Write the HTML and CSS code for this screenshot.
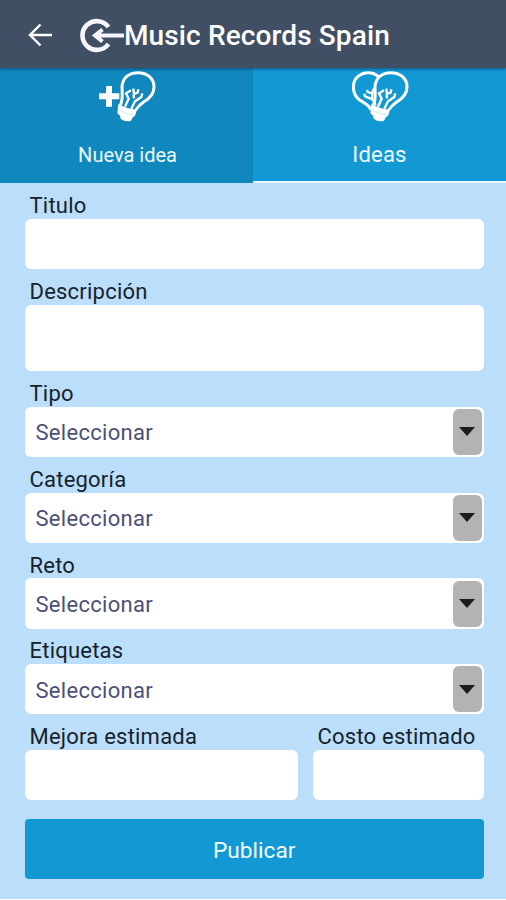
FILE: index.html
```
<!DOCTYPE html>
<html lang="es">
<head>
<meta charset="utf-8">
<title>Nueva idea</title>
<link rel="stylesheet" href="styles.css">
</head>
<body>
<header class="bar">
  <svg class="back" width="26" height="26" viewBox="0 0 26 26"><path d="M25 13H3M13.500 2.500L3 13l10.500 10.500"/></svg>
  <svg class="logo" width="46" height="38" viewBox="0 0 46 38"><path class="ring" d="M29.500 11A14.400 14.400 0 1 0 29.500 28"/><path class="arrow" d="M45 19.500H16M23.500 13.500L16 19.500l7.500 6"/></svg>
  <h1 class="title">Music Records Spain</h1>
</header>
<svg class="defs" width="0" height="0">
  <symbol id="bulb" viewBox="0 0 198 180">
    <path class="line" d="M79 118C88 98 84 82 84 62C86 34 106 20 132 20C160 20 180 38 180 63C180 86 166 98 149 108C137 116 132 122 125 132"/>
    <path class="wire" d="M93 122L104 98L96 82L111 73M112 128L123 106L142 93L145 82M120 97L119 85M118 68L120 84L131 80L133 70"/>
    <path class="cap" d="M73 114Q98 129 129 131L123 149L117 153L111 164Q94 169 80 158L78 149L70 142Z"/>
    <path class="groove" d="M75 132Q94 145 121 147"/>
  </symbol>
</svg>
<nav class="tabs">
  <a class="tab active">
    <svg class="icon" width="66" height="58" viewBox="0 6 198 174"><path class="plus" d="M15 91H76M45 60V122"/><use href="#bulb" width="198" height="180"/></svg>
    <span class="tab-small">Nueva idea</span>
  </a>
  <a class="tab other">
    <svg class="icon" width="66" height="58" viewBox="0 6 198 174">
      <path class="line" d="M72 132C66 116 52 112 38 102C14 84 14 48 32 32C50 16 78 16 94 32"/>
      <path class="wire" d="M86 118L77 100L54 91L52 83M75 96L76 82L62 78L60 72M76 82L80 68"/>
      <use href="#bulb" width="198" height="180"/>
    </svg>
    <span class="tab-large">Ideas</span>
  </a>
</nav>
<main class="form">
  <label class="field"><span class="label">Titulo</span><span class="box"></span></label>
  <label class="field"><span class="label">Descripción</span><span class="box tall"></span></label>
  <label class="field"><span class="label">Tipo</span><span class="box select"><span>Seleccionar</span><i class="drop"></i></span></label>
  <label class="field"><span class="label">Categoría</span><span class="box select"><span>Seleccionar</span><i class="drop"></i></span></label>
  <label class="field"><span class="label">Reto</span><span class="box select"><span>Seleccionar</span><i class="drop"></i></span></label>
  <label class="field"><span class="label">Etiquetas</span><span class="box select"><span>Seleccionar</span><i class="drop"></i></span></label>
  <div class="pair">
    <label class="field"><span class="label">Mejora estimada</span><span class="box"></span></label>
    <label class="field"><span class="label">Costo estimado</span><span class="box"></span></label>
  </div>
  <button class="submit">Publicar</button>
</main>
</body>
</html>
```
FILE: styles.css
```
* { box-sizing: border-box; }
body { margin: 0; height: 900px; background: #fff; font-family: Roboto, "Liberation Sans", sans-serif; overflow: hidden; }
.bar { position: relative; display: flex; align-items: center; height: 68px; padding: 3px 0 0 27px; background: #414f65; box-shadow: 0 1px 3px rgba(0, 30, 60, .55); }
.back { fill: none; stroke: #fff; stroke-width: 2.4; margin-top: -2px; }
.logo { margin-left: 26px; fill: none; stroke: #f4f6fc; margin-top: -1px; }
.ring { stroke-width: 4.600; }
.arrow { stroke-width: 4; }
.title { margin: 0 0 0 -1px; color: #fff; font-size: 28px; font-weight: 500; line-height: 36px; letter-spacing: .12px; white-space: nowrap; }
.defs { display: block; height: 0; }
.tabs { display: grid; grid-template-columns: 253px 253px; height: 115px; }
.tab { display: flex; flex-direction: column; align-items: center; color: #eefaff; }
.active { background: #1088bd; }
.other { background: #1299d4; border-bottom: 2px solid #e4f6ff; }
.icon { display: block; flex: none; }
.line { fill: none; stroke: #fff; stroke-width: 9; }
.wire { fill: none; stroke: #fff; stroke-width: 7; }
.cap { fill: #fff; }
.groove { fill: none; stroke: #b9def0; stroke-width: 2; }
.plus { fill: none; stroke: #fff; stroke-width: 18; }
.tab-small { font-size: 20px; line-height: 30px; margin: 14px 0 0 2px; }
.tab-large { font-size: 22px; line-height: 30px; letter-spacing: .2px; margin-top: 14px; }
.form { display: flex; flex-direction: column; height: 715.500px; padding: .4px 22px 0 24.500px; background: #bbdefb; }
.field { display: block; }
.label { display: block; height: 35.400px; padding: 8.600px 0 0 5px; font-size: 22px; line-height: 28px; letter-spacing: .22px; color: #17222c; white-space: nowrap; }
.box { display: block; height: 50.400px; background: #fff; border-radius: 6px; }
.tall { height: 66.800px; }
.select { display: flex; align-items: center; justify-content: space-between; padding: 0 2px 0 11px; color: #4c5078; font-size: 22px; letter-spacing: .3px; }
.select span { padding-top: 2px; }
.drop { display: flex; align-items: center; justify-content: center; width: 29.500px; height: 46px; border-radius: 6px; background: #b3b3b3; }
.drop::before { content: ""; border: 8.500px solid transparent; border-top: 9px solid #1c1c1c; border-bottom: 0; }
.pair { display: grid; grid-template-columns: 273px 171.500px; gap: 15px; }
.submit { height: 60px; margin: 19px 0 0; padding: 2px 0 0; border: 0; border-radius: 4px; background: #1299d4; color: #f4fbff; font-family: inherit; font-size: 22.700px; }
```
